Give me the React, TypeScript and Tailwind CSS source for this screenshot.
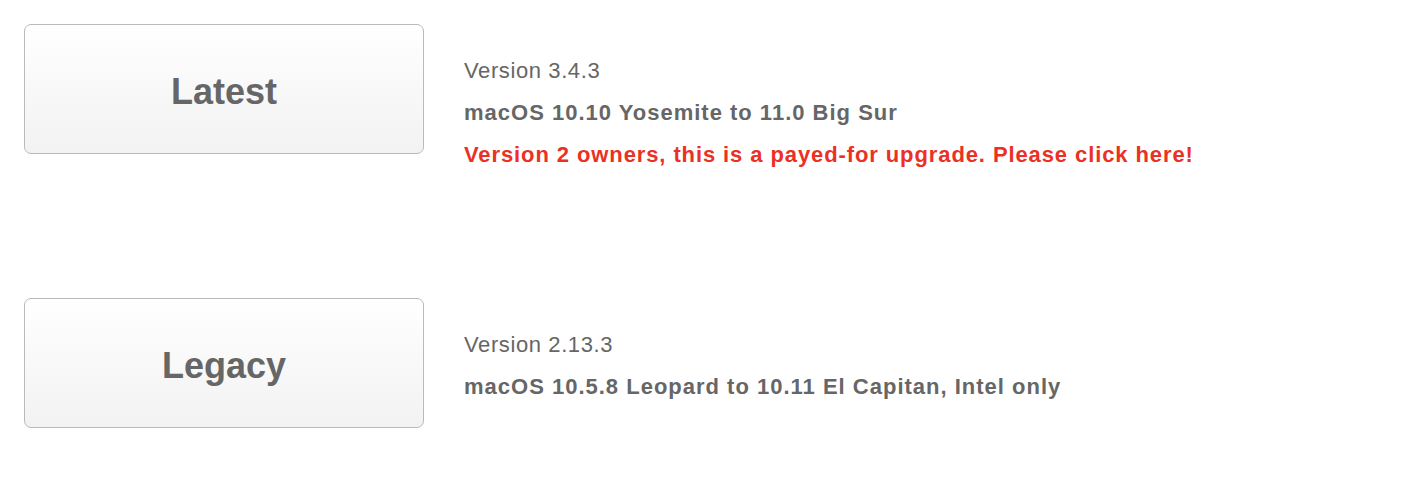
const font = { fontFamily: '"Liberation Sans", Arial, Helvetica, sans-serif' };

function Release({
  label,
  version,
  systems,
  note,
}: {
  label: string;
  version: string;
  systems: string;
  note?: string;
}) {
  return (
    <div className="flex h-[274px] items-start">
      <button className="flex h-[130px] w-[400px] shrink-0 items-center justify-center rounded-[7px] border-[1.5px] border-[#bababa] bg-gradient-to-b from-white to-[#f2f2f2] pt-[5px] text-[36px] font-bold text-[#666666]">
        {label}
      </button>
      <div className="ml-10 pt-[26px] text-[22px] leading-[42px] text-[#666666]">
        <p className="tracking-[0.6px]">{version}</p>
        <p className="font-bold tracking-[1px]">{systems}</p>
        {note && (
          <p className="cursor-pointer font-bold tracking-[0.9px] text-[#ea3124]">{note}</p>
        )}
      </div>
    </div>
  );
}

export default function App() {
  return (
    <div className="min-h-screen bg-white px-6 pt-6" style={font}>
      <Release
        label="Latest"
        version="Version 3.4.3"
        systems="macOS 10.10 Yosemite to 11.0 Big Sur"
        note="Version 2 owners, this is a payed-for upgrade. Please click here!"
      />
      <Release
        label="Legacy"
        version="Version 2.13.3"
        systems="macOS 10.5.8 Leopard to 10.11 El Capitan, Intel only"
      />
    </div>
  );
}
